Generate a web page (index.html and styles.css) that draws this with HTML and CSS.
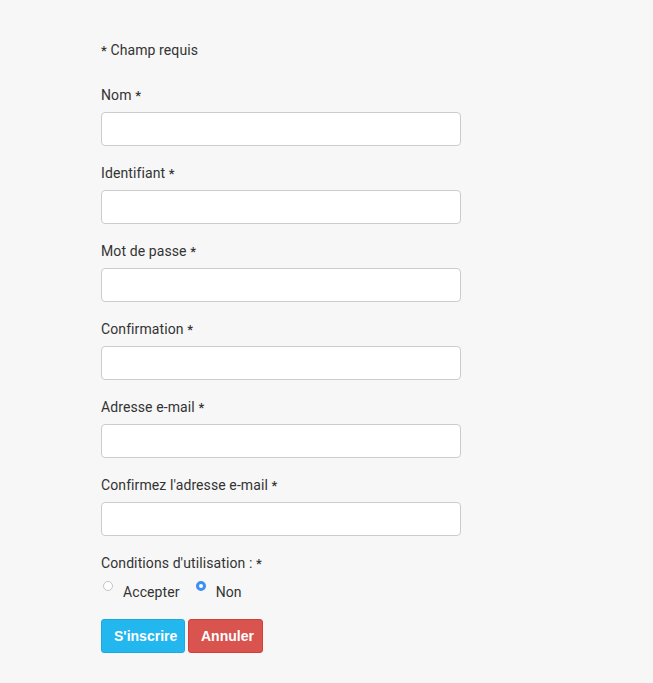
FILE: index.html
```html
<!DOCTYPE html>
<html lang="fr">
<head>
    <meta charset="UTF-8">
    <meta name="viewport" content="width=device-width, initial-scale=1.0">
    <title>Inscription</title>
    <link rel="stylesheet" href="styles.css">
</head>
<body>
    <div class="container">
        <p class="required-note"><span class="star">*</span> Champ requis</p>
        <form class="register-form">
            <div class="input-field">
                <label for="name">Nom <span class="star">*</span></label>
                <input type="text" id="name">
            </div>
            <div class="input-field">
                <label for="username">Identifiant <span class="star">*</span></label>
                <input type="text" id="username">
            </div>
            <div class="input-field">
                <label for="password">Mot de passe <span class="star">*</span></label>
                <input type="password" id="password">
            </div>
            <div class="input-field">
                <label for="password2">Confirmation <span class="star">*</span></label>
                <input type="password" id="password2">
            </div>
            <div class="input-field">
                <label for="email">Adresse e-mail <span class="star">*</span></label>
                <input type="email" id="email">
            </div>
            <div class="input-field">
                <label for="email2">Confirmez l'adresse e-mail <span class="star">*</span></label>
                <input type="email" id="email2">
            </div>
            <div class="input-field terms">
                <label>Conditions d'utilisation : <span class="star">*</span></label>
                <div class="radios">
                    <label class="radio"><input type="radio" name="tos" value="1"> Accepter</label>
                    <label class="radio"><input type="radio" name="tos" value="0" checked> Non</label>
                </div>
            </div>
            <div class="buttons">
                <button type="submit" class="btn btn-primary">S'inscrire</button>
                <button type="button" class="btn btn-danger">Annuler</button>
            </div>
        </form>
    </div>
</body>
</html>
```

FILE: styles.css
```css
body {
    font-family: Roboto, "Noto Sans", Arial, sans-serif;
    font-size: 14px;
    color: #333;
    background-color: #f7f7f7;
    margin: 0;
}
.container {
    padding: 40px 0 0 101px;
}
.required-note {
    margin: 0 0 25px;
    height: 20px;
    line-height: 20px;
    letter-spacing: 0.1px;
}
.star {
    font-size: 13px;
    font-weight: 500;
    line-height: 1;
}
.input-field {
    margin-bottom: 17px;
}
.input-field label {
    display: block;
    height: 20px;
    line-height: 20px;
    margin-bottom: 7px;
    letter-spacing: 0.1px;
}
.input-field input[type="text"],
.input-field input[type="password"],
.input-field input[type="email"] {
    display: block;
    box-sizing: border-box;
    width: 360px;
    height: 34px;
    border: 1px solid #cccccc;
    border-radius: 4px;
    background: #fff;
    padding: 6px 12px;
    font: inherit;
}
.terms {
    margin-bottom: 18px;
}
.terms > label {
    margin-bottom: 10px;
}
.radios {
    display: flex;
    gap: 16px;
    padding-left: 2px;
}
.input-field .radios .radio {
    display: flex;
    align-items: flex-start;
    margin: 0;
    height: 18px;
    line-height: 18px;
}
.radio input {
    appearance: none;
    -webkit-appearance: none;
    width: 10px;
    height: 10px;
    border-radius: 50%;
    border: 1px solid #c4c4c4;
    background: #fff;
    margin: -2px 10px 0 0;
    box-sizing: border-box;
}
.radio input:checked {
    border: 3px solid #3b8ff5;
}
.buttons {
    display: flex;
    gap: 3px;
}
.btn {
    height: 34px;
    padding: 0 12px;
    border: 1px solid transparent;
    border-radius: 3px;
    font-family: "Liberation Sans", Arial, sans-serif;
    font-weight: bold;
    font-size: 14px;
    color: white;
    cursor: pointer;
}
.btn-primary {
    background-color: #23b7ef;
    border-color: #1ea9df;
    width: 84px;
}
.btn-danger {
    background-color: #d9534f;
    border-color: #d43f3a;
    width: 75px;
}
```
